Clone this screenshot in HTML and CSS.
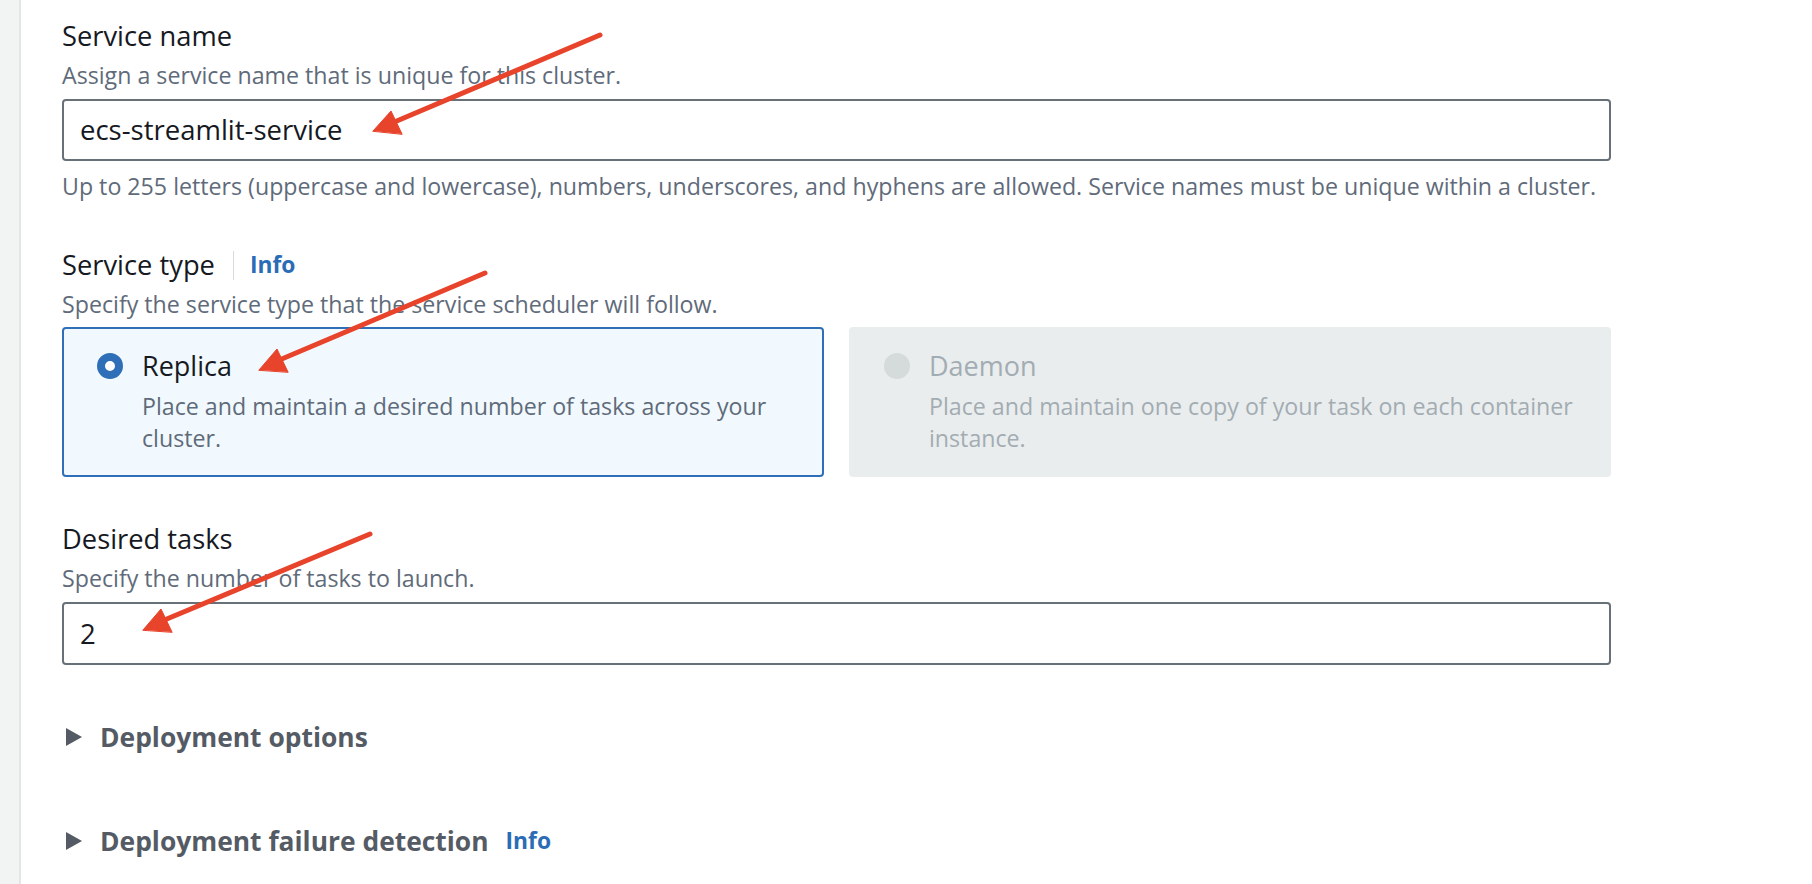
FILE: index.html
```html
<!DOCTYPE html>
<html lang="en">
<head>
<meta charset="utf-8">
<title>Service configuration</title>
<link rel="stylesheet" href="styles.css">
</head>
<body>
<div class="page">
  <div class="rail"></div>
  <main class="content">
    <section class="field field-name">
      <div class="label">Service name</div>
      <div class="desc">Assign a service name that is unique for this cluster.</div>
      <div class="input">ecs-streamlit-service</div>
      <div class="constraint">Up to 255 letters (uppercase and lowercase), numbers, underscores, and hyphens are allowed. Service names must be unique within a cluster.</div>
    </section>

    <section class="field field-type">
      <div class="label-row">
        <span class="label">Service type</span>
        <span class="sep"></span>
        <a class="info">Info</a>
      </div>
      <div class="desc">Specify the service type that the service scheduler will follow.</div>
      <div class="tiles">
        <div class="tile tile-selected">
          <span class="radio radio-on"></span>
          <div class="tile-text">
            <div class="tile-label">Replica</div>
            <div class="tile-desc">Place and maintain a desired number of tasks across your cluster.</div>
          </div>
        </div>
        <div class="tile tile-disabled">
          <span class="radio radio-off"></span>
          <div class="tile-text">
            <div class="tile-label">Daemon</div>
            <div class="tile-desc">Place and maintain one copy of your task on each container instance.</div>
          </div>
        </div>
      </div>
    </section>

    <section class="field field-tasks">
      <div class="label">Desired tasks</div>
      <div class="desc">Specify the number of tasks to launch.</div>
      <div class="input">2</div>
    </section>

    <div class="expander exp-options">
      <span class="caret"></span>
      <span class="exp-title">Deployment options</span>
    </div>

    <div class="expander exp-failure">
      <span class="caret"></span>
      <span class="exp-title">Deployment failure detection</span>
      <a class="info">Info</a>
    </div>
  </main>

  <svg class="arrows" width="1812" height="884" viewBox="0 0 1812 884">
    <g fill="#e8432b" stroke="#e8432b" stroke-linecap="round">
      <line x1="600" y1="35" x2="392" y2="123" stroke-width="5"/>
      <polygon points="373,131 391,111 402,134" stroke-width="1" stroke-linejoin="round"/>
      <line x1="485" y1="273" x2="277" y2="361" stroke-width="5"/>
      <polygon points="259,370 277,349 288,372" stroke-width="1" stroke-linejoin="round"/>
      <line x1="370" y1="534" x2="162" y2="621" stroke-width="5"/>
      <polygon points="143,630 161,609 172,632" stroke-width="1" stroke-linejoin="round"/>
    </g>
  </svg>
</div>
</body>
</html>
```

FILE: styles.css
```css
html, body {
  margin: 0;
  padding: 0;
  background: #ffffff;
  overflow: hidden;
}

body {
  font-family: "Open Sans", "Noto Sans", sans-serif;
  color: #16191f;
}

.page {
  position: relative;
  display: flex;
  width: 1812px;
  height: 884px;
}

.rail {
  width: 19px;
  flex: none;
  background: #f2f3f3;
  border-right: 2px solid #e3e5e6;
}

.content {
  display: flex;
  flex-direction: column;
  padding-left: 41px;
  width: 1549px;
}

.field {
  display: flex;
  flex-direction: column;
}

.field-name { margin-top: 21px; }
.field-type { margin-top: 49px; }
.field-tasks { margin-top: 47px; }

.label {
  font-size: 27.3px;
  line-height: 30px;
  color: #16191f;
}

.label-row {
  display: flex;
  align-items: center;
  height: 30px;
}

.sep {
  width: 1px;
  height: 29px;
  background: #d5dbdb;
  margin: 0 16px 0 18px;
}

.info {
  font-size: 22.8px;
  font-weight: 700;
  color: #2a6cb5;
  line-height: 30px;
}

.desc {
  font-size: 23.2px;
  line-height: 30px;
  color: #5f6b7a;
  margin-top: 9px;
}

.input {
  box-sizing: border-box;
  height: 62px;
  margin-top: 9px;
  border: 2px solid #687078;
  border-radius: 4px;
  padding-left: 16px;
  font-size: 27.5px;
  line-height: 58px;
  color: #16191f;
}

.field-tasks .input { height: 63px; line-height: 59px; }

.constraint {
  font-size: 23.2px;
  line-height: 30px;
  color: #5f6b7a;
  margin-top: 10px;
}

.tiles {
  display: grid;
  grid-template-columns: 762px 762px;
  column-gap: 25px;
  margin-top: 8px;
}

.tile {
  box-sizing: border-box;
  height: 150px;
  display: flex;
  align-items: flex-start;
  padding: 22px 20px 0 33px;
  border: 2px solid transparent;
  border-radius: 4px;
}

.tile-selected {
  background: #f1f9fe;
  border-color: #2f6fb7;
}

.tile-disabled {
  background: #eaeded;
  border-color: #eaeded;
}

.radio {
  flex: none;
  box-sizing: border-box;
  width: 26px;
  height: 26px;
  border-radius: 50%;
  margin-top: 2px;
}

.radio-on {
  border: 8.5px solid #2f6fb7;
  background: #ffffff;
}

.radio-off {
  background: #d5dbdb;
}

.tile-text {
  margin-left: 19px;
}

.tile-label {
  font-size: 27px;
  line-height: 30px;
  color: #16191f;
}

.tile-desc {
  font-size: 23.2px;
  line-height: 32px;
  color: #5f6b7a;
  margin-top: 9px;
}

.tile-disabled .tile-label { color: #a2acb3; }
.tile-disabled .tile-desc { color: #a2acb3; }

.expander {
  display: flex;
  align-items: center;
  height: 32px;
}

.exp-options { margin-top: 56px; }
.exp-failure { margin-top: 72px; }

.caret {
  width: 0;
  height: 0;
  border-top: 9.5px solid transparent;
  border-bottom: 9.5px solid transparent;
  border-left: 16px solid #545b64;
  margin-left: 4px;
}

.exp-title {
  font-size: 26.4px;
  font-weight: 700;
  color: #545b64;
  margin-left: 18px;
}

.exp-failure .info {
  margin-left: 17px;
}

.arrows {
  position: absolute;
  left: 0;
  top: 0;
  pointer-events: none;
}
```
